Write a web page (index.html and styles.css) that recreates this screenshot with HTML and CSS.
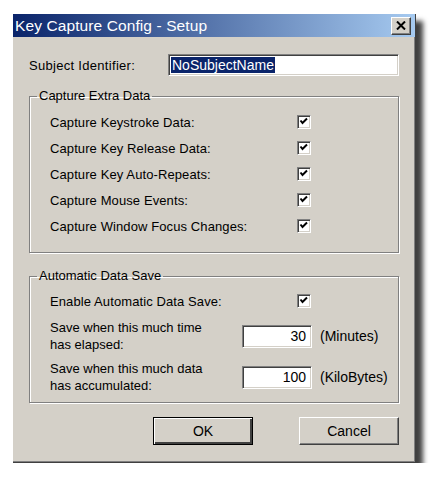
FILE: index.html
```html
<!DOCTYPE html>
<html lang="en">

<head>
    <meta charset="UTF-8">
    <title>Key Capture Config - Setup</title>
    <link rel="stylesheet" href="styles.css">
</head>

<body>
    <div class="dialog">
        <div class="titlebar">
            <span class="title">Key Capture Config - Setup</span>
            <span class="close-btn">
                <svg width="10" height="9" viewBox="0 0 10 9"><path d="M1 0.5 L9 8.5 M9 0.5 L1 8.5" stroke="#000" stroke-width="2" fill="none"/></svg>
            </span>
        </div>
        <div class="content">
            <div class="subject-row">
                <span class="label">Subject Identifier:</span>
                <div class="textbox subject"><span class="selected">NoSubjectName</span></div>
            </div>

            <fieldset class="group capture">
                <legend>Capture Extra Data</legend>
                <div class="opt"><span class="opt-label">Capture Keystroke Data:</span><span class="check"><svg width="12" height="12" viewBox="0 0 12 12"><polyline points="2.5,4.5 4.5,7 9,2.5" stroke="#000" stroke-width="2" fill="none"/></svg></span></div>
                <div class="opt"><span class="opt-label">Capture Key Release Data:</span><span class="check"><svg width="12" height="12" viewBox="0 0 12 12"><polyline points="2.5,4.5 4.5,7 9,2.5" stroke="#000" stroke-width="2" fill="none"/></svg></span></div>
                <div class="opt"><span class="opt-label">Capture Key Auto-Repeats:</span><span class="check"><svg width="12" height="12" viewBox="0 0 12 12"><polyline points="2.5,4.5 4.5,7 9,2.5" stroke="#000" stroke-width="2" fill="none"/></svg></span></div>
                <div class="opt"><span class="opt-label">Capture Mouse Events:</span><span class="check"><svg width="12" height="12" viewBox="0 0 12 12"><polyline points="2.5,4.5 4.5,7 9,2.5" stroke="#000" stroke-width="2" fill="none"/></svg></span></div>
                <div class="opt"><span class="opt-label">Capture Window Focus Changes:</span><span class="check"><svg width="12" height="12" viewBox="0 0 12 12"><polyline points="2.5,4.5 4.5,7 9,2.5" stroke="#000" stroke-width="2" fill="none"/></svg></span></div>
            </fieldset>

            <fieldset class="group save">
                <legend>Automatic Data Save</legend>
                <div class="opt"><span class="opt-label">Enable Automatic Data Save:</span><span class="check"><svg width="12" height="12" viewBox="0 0 12 12"><polyline points="2.5,4.5 4.5,7 9,2.5" stroke="#000" stroke-width="2" fill="none"/></svg></span></div>
                <div class="num-row">
                    <span class="num-label">Save when this much time<br>has elapsed:</span>
                    <div class="textbox num">30</div>
                    <span class="unit">(Minutes)</span>
                </div>
                <div class="num-row">
                    <span class="num-label">Save when this much data<br>has accumulated:</span>
                    <div class="textbox num">100</div>
                    <span class="unit">(KiloBytes)</span>
                </div>
            </fieldset>

            <div class="buttons">
                <button class="btn default">OK</button>
                <button class="btn">Cancel</button>
            </div>
        </div>
    </div>
</body>

</html>
```

FILE: styles.css
```css
body {
    margin: 0;
    background: #fff;
    font-family: "Liberation Sans", Arial, sans-serif;
    font-size: 13px;
    color: #000;
}

.dialog {
    width: 403px;
    height: 449px;
    margin: 14px 0 0 13px;
    box-sizing: border-box;
    background: #d4d0c8;
    border-right: 1px solid #404040;
    border-bottom: 1px solid #404040;
    box-shadow: inset -1px -1px 0 #808080, 7px 7px 5px rgba(0, 0, 0, 0.75);
}

.titlebar {
    height: 23px;
    display: flex;
    align-items: center;
    justify-content: space-between;
    background: linear-gradient(to right, #0a246a, #a6caf0);
    padding-left: 2px;
    padding-right: 4px;
}

.title {
    color: #fff;
    font-size: 15.5px;
    letter-spacing: 0.1px;
}

.close-btn {
    width: 20px;
    height: 18px;
    box-sizing: border-box;
    display: flex;
    align-items: center;
    justify-content: center;
    background: #d4d0c8;
    border: 1px solid;
    border-color: #fff #404040 #404040 #fff;
    box-shadow: inset -1px -1px 0 #808080;
}

.content {
    padding: 17px 16px 0 16px;
}

.subject-row {
    display: flex;
    align-items: center;
    height: 22px;
}

.subject-row .label {
    width: 139px;
    letter-spacing: 0.3px;
}

.textbox {
    box-sizing: border-box;
    background: #fff;
    border: 1px solid;
    border-color: #808080 #fff #fff #808080;
    box-shadow: inset 1px 1px 0 #404040, inset -1px -1px 0 #d4d0c8;
}

.subject {
    width: 231px;
    height: 22px;
    padding: 2px 0 0 2px;
}

.selected {
    display: inline-block;
    background: #0a246a;
    color: #fff;
    font-size: 14px;
    line-height: 16px;
    padding: 0 1px;
}

.group {
    margin: 12px 0 0 0;
    padding: 5px 0 13px 20px;
    border: 1px solid #808080;
    box-shadow: inset 1px 1px 0 #fff, 1px 1px 0 #fff;
}

.group legend {
    padding: 0 2px;
    margin-left: -13px;
    line-height: 16px;
}

.opt {
    display: flex;
    align-items: center;
    height: 26px;
}

.opt-label {
    width: 247px;
    letter-spacing: 0.1px;
}

.check {
    width: 14px;
    height: 14px;
    box-sizing: border-box;
    display: flex;
    align-items: center;
    justify-content: center;
    background: #fff;
    border: 1px solid;
    border-color: #808080 #fff #fff #808080;
    box-shadow: inset 1px 1px 0 #404040, inset -1px -1px 0 #d4d0c8;
}

.save {
    margin-top: 15px;
    padding-top: 4px;
    padding-bottom: 6px;
}

.num-row {
    display: flex;
    align-items: center;
    height: 38px;
    margin-top: 3px;
}

.num-label {
    width: 192px;
    line-height: 17px;
}

.num {
    width: 70px;
    height: 23px;
    text-align: right;
    padding-right: 5px;
    line-height: 21px;
    font-size: 14px;
}

.unit {
    margin-left: 8px;
    font-size: 14px;
}

.buttons {
    display: flex;
    justify-content: flex-end;
    gap: 46px;
    margin-top: 14px;
}

.btn {
    width: 100px;
    height: 28px;
    box-sizing: border-box;
    background: #d4d0c8;
    font-family: "Liberation Sans", Arial, sans-serif;
    font-size: 14px;
    color: #000;
    border: 1px solid;
    border-color: #fff #404040 #404040 #fff;
    box-shadow: inset -1px -1px 0 #808080;
    padding: 0;
}

.btn.default {
    border: 1px solid #000;
    box-shadow: inset 1px 1px 0 #fff, inset -2px -2px 0 #404040;
}
```
